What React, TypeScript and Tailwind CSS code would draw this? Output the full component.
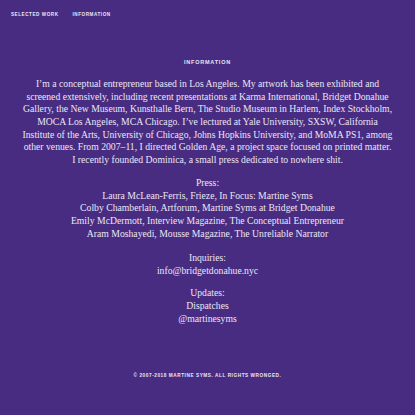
export default function App() {
  return (
    <div className="min-h-[415px] w-full bg-[#472c82] text-[#ece6f4]">
      <nav className="flex gap-[14px] px-[11px] pt-[12px] font-['Liberation_Sans',sans-serif] text-[4.6px] leading-[6px] font-bold tracking-[0.12em]">
        <a href="#">SELECTED WORK</a>
        <a href="#">INFORMATION</a>
      </nav>
      <main className="mx-auto flex w-[385px] flex-col items-center pt-[41px] text-center">
        <h1 className="font-['Liberation_Sans',sans-serif] text-[5.5px] leading-[7px] font-bold tracking-[0.14em]">
          INFORMATION
        </h1>
        <div className="mt-[12px] font-['Liberation_Serif',serif] text-[9.7px] leading-[12.65px]">
          <p>
            I’m a conceptual entrepreneur based in Los Angeles. My artwork has been exhibited and
            <br />
            screened extensively, including recent presentations at Karma International, Bridget Donahue
            <br />
            Gallery, the New Museum, Kunsthalle Bern, The Studio Museum in Harlem, Index Stockholm,
            <br />
            MOCA Los Angeles, MCA Chicago. I’ve lectured at Yale University, SXSW, California
            <br />
            Institute of the Arts, University of Chicago, Johns Hopkins University, and MoMA PS1, among
            <br />
            other venues. From 2007–11, I directed Golden Age, a project space focused on printed matter.
            <br />
            I recently founded Dominica, a small press dedicated to nowhere shit.
          </p>
          <p className="mt-[10.5px]">
            Press:
            <br />
            Laura McLean-Ferris, Frieze, In Focus: Martine Syms
            <br />
            Colby Chamberlain, Artforum, Martine Syms at Bridget Donahue
            <br />
            Emily McDermott, Interview Magazine, The Conceptual Entrepreneur
            <br />
            Aram Moshayedi, Mousse Magazine, The Unreliable Narrator
          </p>
          <p className="mt-[11.5px]">
            Inquiries:
            <br />
            info@bridgetdonahue.nyc
          </p>
          <p className="mt-[10px]">
            Updates:
            <br />
            Dispatches
            <br />
            @martinesyms
          </p>
        </div>
        <footer className="mt-[48px] pb-[36px] font-['Liberation_Sans',sans-serif] text-[4.7px] leading-[6px] font-bold tracking-[0.12em]">
          © 2007-2018 MARTINE SYMS. ALL RIGHTS WRONGED.
        </footer>
      </main>
    </div>
  );
}
